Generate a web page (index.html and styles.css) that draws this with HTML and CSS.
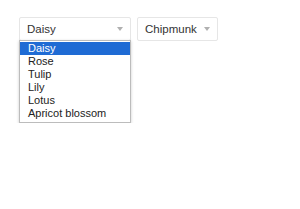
FILE: index.html
```html
<!DOCTYPE html>
<html>
<head>
<meta charset="utf-8">
<link rel="stylesheet" href="styles.css">
</head>
<body>
<div class="row">
  <div class="field">
    <div class="select wide"><span class="label">Daisy</span><span class="arrow"></span></div>
    <ul class="menu">
      <li class="active">Daisy</li>
      <li>Rose</li>
      <li>Tulip</li>
      <li>Lily</li>
      <li>Lotus</li>
      <li>Apricot blossom</li>
    </ul>
  </div>
  <div class="field">
    <div class="select narrow"><span class="label">Chipmunk</span><span class="arrow"></span></div>
  </div>
</div>
</body>
</html>
```
FILE: styles.css
```css
html, body { margin: 0; padding: 0; background: #fff; }
body { font-family: "Liberation Sans", Arial, sans-serif; }
.row { display: flex; align-items: flex-start; gap: 6px; padding: 17px 0 0 19px; }
.field { display: flex; flex-direction: column; }
.select {
  box-sizing: border-box;
  height: 24px;
  border: 1px solid #e6e6e6;
  border-radius: 2px;
  display: flex;
  align-items: center;
  justify-content: space-between;
  padding: 0 7px 0 7px;
  font-size: 11.5px;
  color: #333;
  background: #fff;
}
.wide { width: 112px; }
.narrow { width: 81px; }
.arrow {
  width: 0; height: 0;
  border-left: 3px solid transparent;
  border-right: 3px solid transparent;
  border-top: 4px solid #b0b0b0;
}
.menu {
  margin: -1px 0 0 0;
  width: 112px;
  box-sizing: border-box;
  padding: 1px 0 2px;
  list-style: none;
  border: 1px solid #bcbcbc;
  background: #fff;
  box-shadow: 0 1px 3px rgba(0,0,0,0.2);
  font-size: 11px;
  color: #222;
}
.menu li { height: 13px; line-height: 13px; padding: 0 8px; }
.menu li.active { background: #1f6bd4; color: #fff; }
```
